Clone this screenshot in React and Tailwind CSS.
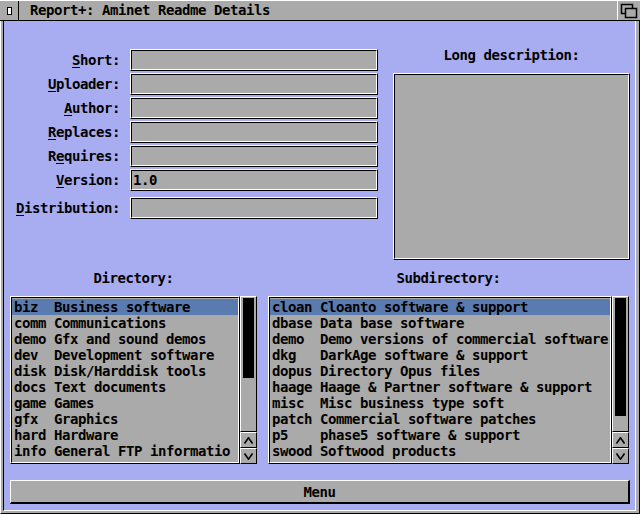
const dirs = [
  ["biz", "Business software"],
  ["comm", "Communications"],
  ["demo", "Gfx and sound demos"],
  ["dev", "Development software"],
  ["disk", "Disk/Harddisk tools"],
  ["docs", "Text documents"],
  ["game", "Games"],
  ["gfx", "Graphics"],
  ["hard", "Hardware"],
  ["info", "General FTP informatio"],
];

const subdirs = [
  ["cloan", "Cloanto software & support"],
  ["dbase", "Data base software"],
  ["demo", "Demo versions of commercial software"],
  ["dkg", "DarkAge software & support"],
  ["dopus", "Directory Opus files"],
  ["haage", "Haage & Partner software & support"],
  ["misc", "Misc business type soft"],
  ["patch", "Commercial software patches"],
  ["p5", "phase5 software & support"],
  ["swood", "Softwood products"],
];

const fields = [
  { pre: "", key: "S", post: "hort:", value: "" },
  { pre: "", key: "U", post: "ploader:", value: "" },
  { pre: "", key: "A", post: "uthor:", value: "" },
  { pre: "", key: "R", post: "eplaces:", value: "" },
  { pre: "R", key: "e", post: "quires:", value: "" },
  { pre: "", key: "V", post: "ersion:", value: "1.0" },
  { pre: "", key: "D", post: "istribution:", value: "", gap: true },
];

const Ridge = ({ className = "", children }) => (
  <div className={`border border-t-white border-l-white border-r-black border-b-black ${className}`}>
    <div className="h-full border border-t-black border-l-black border-r-white border-b-white bg-[#aaaaaa] overflow-hidden">
      {children}
    </div>
  </div>
);

const Arrow = ({ up }) => (
  <div className="h-[16px] flex items-center justify-center bg-[#aaaaaa] border border-t-white border-l-white border-r-black border-b-black">
    <svg width="9" height="7" viewBox="0 0 9 7">
      <polyline
        points={up ? "0.5,6.5 4.5,0.8 8.5,6.5" : "0.5,0.5 4.5,6.2 8.5,0.5"}
        fill="none"
        stroke="black"
        strokeWidth="1.6"
      />
    </svg>
  </div>
);

const Scroller = ({ knob }) => (
  <div className="w-[17px] h-full flex flex-col">
    <div className="flex-1 bg-[#aaaaaa] border border-t-white border-l-white border-r-black border-b-black px-[2px] pt-[1px]">
      <div className="bg-black" style={{ height: knob }} />
    </div>
    <Arrow up />
    <Arrow />
  </div>
);

const List = ({ rows, nameWidth, width, knob }) => (
  <div className="flex h-full">
    <Ridge className={`h-full ${width}`}>
      <div className="pt-[1px]">
        {rows.map(([name, desc], i) => (
          <div
            key={name}
            className={`h-[16px] leading-[16px] px-[2px] whitespace-pre flex ${i === 0 ? "bg-[#5a7bb0]" : ""}`}
          >
            <span className={`${nameWidth} shrink-0`}>{name}</span>
            <span>{desc}</span>
          </div>
        ))}
      </div>
    </Ridge>
    <Scroller knob={knob} />
  </div>
);

export default function App() {
  return (
    <div className="w-[640px] h-[514px] bg-[#aaaaaa] flex flex-col text-black text-[14px] font-bold tracking-[-0.43px] font-['DejaVu_Sans_Mono',monospace] overflow-hidden">
      {/* title bar */}
      <div className="h-[21px] flex border-t border-t-white border-b border-b-black">
        <div className="w-[19px] border-r border-r-black flex items-center justify-center">
          <div className="w-[5px] h-[8px] border border-black bg-white" />
        </div>
        <div className="ml-[11px] leading-[19px]">Report+: Aminet Readme Details</div>
        <div className="flex-1" />
        <div className="w-[23px] border-l border-l-white">
          <svg width="22" height="19" viewBox="0 0 22 19">
            <rect x="3.5" y="3.5" width="11" height="9" fill="none" stroke="black" strokeWidth="1.5" />
            <rect x="7.5" y="7.5" width="11" height="9" fill="#aaaaaa" stroke="black" strokeWidth="1.5" />
          </svg>
        </div>
      </div>

      {/* frame */}
      <div className="flex-1 flex flex-col border-l border-l-white border-r border-r-black border-b border-b-black pl-[2px] pr-[3px] pb-[2px]">
        <div className="flex-1 flex flex-col bg-[#a8acf0] border-l border-l-black border-r border-r-white border-b border-b-white">
          {/* top section */}
          <div className="h-[239px] flex">
            <div className="w-[374px] pt-[28px] flex flex-col gap-[2px]">
              {fields.map((f) => (
                <div key={f.post} className={`h-[22px] flex items-center ${f.gap ? "mt-[4px]" : ""}`}>
                  <div className="w-[116px] text-right whitespace-pre leading-[16px]">
                    {f.pre}
                    <span className="underline underline-offset-[2px]">{f.key}</span>
                    {f.post}
                  </div>
                  <Ridge className="ml-[10px] w-[248px] h-[22px]">
                    <div className="pl-[1px] leading-[18px]">{f.value}</div>
                  </Ridge>
                </div>
              ))}
            </div>
            <div className="ml-[15px] w-[237px] pt-[26px] flex flex-col">
              <div className="h-[16px] leading-[16px] text-center">Long description:</div>
              <Ridge className="mt-[10px] h-[187px]" />
            </div>
          </div>

          {/* list labels */}
          <div className="mt-[10px] h-[16px] leading-[16px] flex pl-[6px]">
            <div className="w-[247px] text-center">Directory:</div>
            <div className="ml-[11px] w-[361px] text-center">Subdirectory:</div>
          </div>

          {/* lists */}
          <div className="mt-[10px] h-[168px] flex pl-[6px] gap-[11px]">
            <List rows={dirs} nameWidth="w-[40px]" width="w-[230px]" knob={80} />
            <List rows={subdirs} nameWidth="w-[48px]" width="w-[344px]" knob={118} />
          </div>

          {/* menu button */}
          <div className="mt-[16px] ml-[6px] mr-[5px] h-[24px] bg-[#aaaaaa] border-t border-l border-t-white border-l-white border-r-2 border-b-2 border-r-black border-b-black flex items-center justify-center leading-[16px]">
            Menu
          </div>
        </div>
      </div>
    </div>
  );
}
